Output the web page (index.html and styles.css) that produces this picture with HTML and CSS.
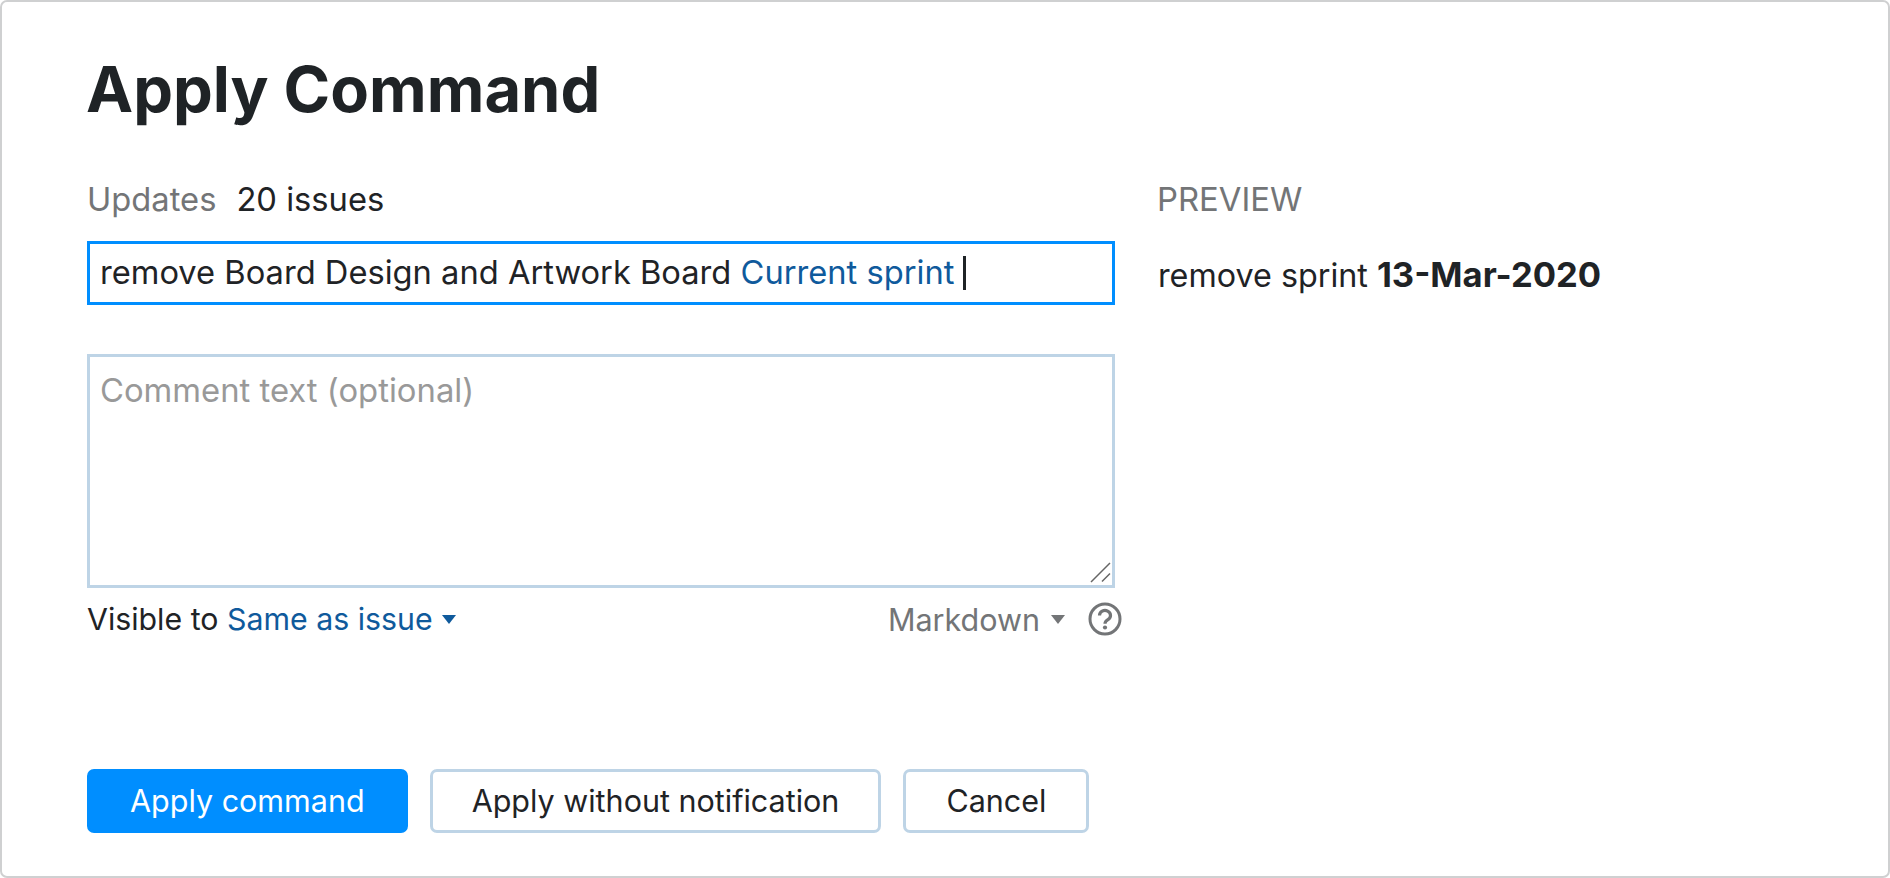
FILE: index.html
```html
<!DOCTYPE html>
<html lang="en">
<head>
<meta charset="utf-8">
<title>Apply Command</title>
<link rel="stylesheet" href="styles.css">
</head>
<body>
<div class="dialog">
  <h1 class="title">Apply Command</h1>
  <div class="columns">
    <div class="main">
      <div class="updates"><span class="muted">Updates</span><span class="count">20 issues</span></div>
      <div class="command"><span>remove Board Design and Artwork Board </span><span class="link">Current sprint</span><span class="caret"></span></div>
      <div class="comment">
        <span class="placeholder">Comment text (optional)</span>
        <svg class="grip" width="22" height="22" viewBox="0 0 22 22"><path d="M1 20L20 1M12 19.5L20 11.5" stroke="#666" stroke-width="1.5" fill="none"/></svg>
      </div>
      <div class="meta">
        <div class="visible">Visible to <span class="link">Same as issue</span><svg class="tri" width="14" height="9" viewBox="0 0 14 9"><path d="M0 0H14L7 9Z" fill="#0f5a9c"/></svg></div>
        <div class="format">
          <span class="muted">Markdown</span><svg class="tri tri-gray" width="14" height="9" viewBox="0 0 14 9"><path d="M0 0H14L7 9Z" fill="#737577"/></svg>
          <svg class="help" width="34" height="34" viewBox="0 0 34 34"><circle cx="17" cy="17" r="15" fill="none" stroke="#737577" stroke-width="3"/><path d="M11.5 13.5a5.5 5 0 1 1 8.4 4.2c-1.9 1.2-2.9 2-2.9 4" fill="none" stroke="#737577" stroke-width="3.2"/><circle cx="17" cy="25.5" r="2.1" fill="#737577"/></svg>
        </div>
      </div>
    </div>
    <div class="preview">
      <div class="preview-title">PREVIEW</div>
      <div class="preview-text">remove sprint <b>13-Mar-2020</b></div>
    </div>
  </div>
  <div class="actions">
    <button class="btn primary">Apply command</button>
    <button class="btn">Apply without notification</button>
    <button class="btn cancel">Cancel</button>
  </div>
</div>
</body>
</html>
```
FILE: styles.css
```css
* { box-sizing: border-box; }
html, body { margin: 0; height: 100%; background: #fff; }
body {
  font-family: Inter, "Liberation Sans", sans-serif;
  font-size: 30.5px;
  color: #1f2326;
}
.dialog {
  height: 878px;
  border: 2px solid #cfd0d1;
  border-radius: 7px;
  padding: 0 85px;
  display: flex;
  flex-direction: column;
}
.title {
  margin: 48px 0 0 -1px;
  font-size: 63.2px;
  line-height: 78px;
  font-weight: 700;
}
.columns {
  display: flex;
  gap: 43px;
  margin-top: 56px;
}
.main { width: 1028px; }
.updates { height: 33px; line-height: 31px; display: flex; gap: 20px; font-size: 32.7px; }
.muted { color: #737577; }
.link { color: #0f5a9c; }
.command {
  margin-top: 24px;
  height: 64px;
  border: 3px solid #008eff;
  padding: 0 10px 3px;
  display: flex;
  align-items: center;
  white-space: pre;
  font-size: 32.66px;
}
.caret { width: 3px; height: 34px; margin-left: 9px; margin-top: 3px; background: #1f2326; }
.comment {
  position: relative;
  margin-top: 49px;
  height: 234px;
  border: 3px solid #bed4e6;
  padding: 15px 10px;
  line-height: 36px;
  font-size: 32.8px;
}
.placeholder { color: #999; }
.grip { position: absolute; right: 0; bottom: 1px; }
.meta {
  display: flex;
  justify-content: space-between;
  align-items: center;
  margin-top: 13px;
  height: 36px;
  margin-right: -7px;
  font-size: 30.3px;
}
.visible, .format { display: flex; align-items: center; white-space: pre; }
.format .muted { font-size: 30.5px; }
.tri { margin-left: 9px; }
.tri-gray { margin-left: 11px; }
.help { margin-left: 23px; }
.preview { flex: 1; }
.preview-title { height: 33px; line-height: 31px; color: #737577; font-size: 32.8px; margin-left: -1px; }
.preview-text { margin-top: 35px; line-height: 44px; font-size: 32.3px; }
.preview-text b { font-weight: 700; font-size: 34.6px; }
.actions {
  margin-top: 132px;
  display: flex;
  gap: 22px;
}
.btn {
  height: 64px;
  padding: 0 39px 2px;
  font: inherit;
  color: #1f2326;
  background: #fff;
  border: 3px solid #bed4e6;
  border-radius: 7px;
}
.cancel { padding: 0 40px 2px; }
.primary { padding: 0 40px 2px; background: #008eff; border-color: #008eff; color: #fff; }
```
